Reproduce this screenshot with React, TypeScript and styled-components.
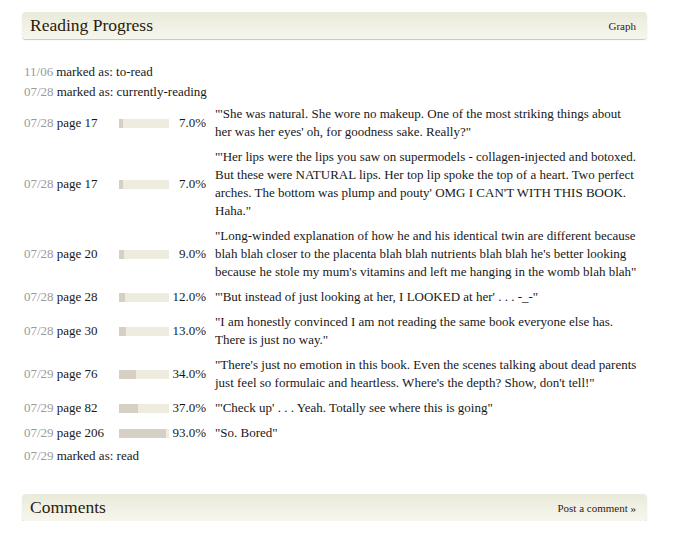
import React from 'react'
import styled, { createGlobalStyle } from 'styled-components'

const GlobalStyle = createGlobalStyle`
  body {
    margin: 0;
    background: #fff;
    font-family: "Liberation Serif", Georgia, serif;
    color: #181818;
  }
`

const Page = styled.div`
  width: 690px;
  padding: 12px 43px 0 22px;
  box-sizing: border-box;
`

const Header = styled.div`
  display: flex;
  align-items: center;
  justify-content: space-between;
  height: 27px;
  padding: 0 11px 0 8px;
  border-radius: 4px;
  background: linear-gradient(#eaeada, #f6f6ee);
  box-shadow: 0 1px 1px #c6c6bc;
`

const HeaderTitle = styled.h2`
  margin: 0;
  font-size: 17.5px;
  font-weight: normal;
  color: #2a1a0c;
`

const HeaderLink = styled.a`
  font-size: 11px;
  color: #382110;
  text-decoration: none;
`

const Table = styled.table`
  border-collapse: collapse;
  margin: 23px 0 28px 2px;
  font-size: 13px;
  line-height: 18px;
`

const Cell = styled.td<{ $w?: number; $right?: boolean }>`
  padding: 3px 0 4px;
  vertical-align: middle;
  white-space: ${p => (p.$right ? 'nowrap' : 'normal')};
  width: ${p => (p.$w ? `${p.$w}px` : 'auto')};
  text-align: ${p => (p.$right ? 'right' : 'left')};
`

const MarkCell = styled.td`
  padding: 1px 0;
  white-space: nowrap;
`

const Date = styled.span`
  color: #9a9a9a;
  margin-right: 3px;
`

const Bar = styled.div`
  width: 50px;
  height: 9px;
  background: #eeebdf;
`

const Fill = styled.div`
  height: 100%;
  background: #d6d0c4;
`

const Quote = styled.td`
  padding: 3px 0 4px 9px;
  width: 425px;
`

type Entry =
  | { kind: 'mark'; date: string; status: string }
  | { kind: 'page'; date: string; page: number; pct: number; text: string }

const entries: Entry[] = [
  { kind: 'mark', date: '11/06', status: 'to-read' },
  { kind: 'mark', date: '07/28', status: 'currently-reading' },
  {
    kind: 'page', date: '07/28', page: 17, pct: 7,
    text: `"'She was natural. She wore no makeup. One of the most striking things about her was her eyes' oh, for goodness sake. Really?"`,
  },
  {
    kind: 'page', date: '07/28', page: 17, pct: 7,
    text: `"'Her lips were the lips you saw on supermodels - collagen-injected and botoxed. But these were NATURAL lips. Her top lip spoke the top of a heart. Two perfect arches. The bottom was plump and pouty' OMG I CAN'T WITH THIS BOOK. Haha."`,
  },
  {
    kind: 'page', date: '07/28', page: 20, pct: 9,
    text: `"Long-winded explanation of how he and his identical twin are different because blah blah closer to the placenta blah blah nutrients blah blah he's better looking because he stole my mum's vitamins and left me hanging in the womb blah blah"`,
  },
  {
    kind: 'page', date: '07/28', page: 28, pct: 12,
    text: `"'But instead of just looking at her, I LOOKED at her' . . . -_-"`,
  },
  {
    kind: 'page', date: '07/28', page: 30, pct: 13,
    text: `"I am honestly convinced I am not reading the same book everyone else has. There is just no way."`,
  },
  {
    kind: 'page', date: '07/29', page: 76, pct: 34,
    text: `"There's just no emotion in this book. Even the scenes talking about dead parents just feel so formulaic and heartless. Where's the depth? Show, don't tell!"`,
  },
  {
    kind: 'page', date: '07/29', page: 82, pct: 37,
    text: `"'Check up' . . . Yeah. Totally see where this is going"`,
  },
  { kind: 'page', date: '07/29', page: 206, pct: 93, text: `"So. Bored"` },
  { kind: 'mark', date: '07/29', status: 'read' },
]

export default function App() {
  return (
    <Page>
      <GlobalStyle />
      <Header>
        <HeaderTitle>Reading Progress</HeaderTitle>
        <HeaderLink href="#">Graph</HeaderLink>
      </Header>
      <Table>
        <tbody>
          {entries.map((e, i) =>
            e.kind === 'mark' ? (
              <tr key={i}>
                <MarkCell colSpan={4}>
                  <Date>{e.date}</Date>marked as: {e.status}
                </MarkCell>
              </tr>
            ) : (
              <tr key={i}>
                <Cell $w={95}>
                  <Date>{e.date}</Date>page {e.page}
                </Cell>
                <Cell $w={50}>
                  <Bar>
                    <Fill style={{ width: `${e.pct}%` }} />
                  </Bar>
                </Cell>
                <Cell $w={37} $right>
                  {e.pct.toFixed(1)}%
                </Cell>
                <Quote>{e.text}</Quote>
              </tr>
            )
          )}
        </tbody>
      </Table>
      <Header>
        <HeaderTitle>Comments</HeaderTitle>
        <HeaderLink href="#">Post a comment »</HeaderLink>
      </Header>
    </Page>
  )
}
